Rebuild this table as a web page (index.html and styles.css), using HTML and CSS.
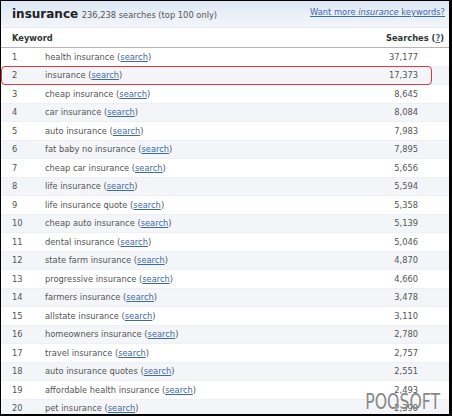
FILE: index.html
```html
<!DOCTYPE html>
<html>
<head>
<meta charset="utf-8">
<link rel="stylesheet" href="styles.css">
</head>
<body>
<div class="frame">
  <div class="topbar">
    <div class="title"><span class="kw">insurance</span> <span class="count">236,238 searches (top 100 only)</span></div>
    <a class="more" href="#">Want more <i>insurance</i> keywords?</a>
  </div>
  <div class="head">
    <span class="h-kw">Keyword</span>
    <span class="h-s">Searches (<a href="#">?</a>)</span>
  </div>
  <div class="rows">
    <div class="row"><span class="n">1</span><span class="k">health insurance (<a href="#">search</a>)</span><span class="s">37,177</span></div>
    <div class="row alt"><span class="n">2</span><span class="k">insurance (<a href="#">search</a>)</span><span class="s">17,373</span><div class="mark"></div></div>
    <div class="row"><span class="n">3</span><span class="k">cheap insurance (<a href="#">search</a>)</span><span class="s">8,645</span></div>
    <div class="row alt"><span class="n">4</span><span class="k">car insurance (<a href="#">search</a>)</span><span class="s">8,084</span></div>
    <div class="row"><span class="n">5</span><span class="k">auto insurance (<a href="#">search</a>)</span><span class="s">7,983</span></div>
    <div class="row alt"><span class="n">6</span><span class="k">fat baby no insurance (<a href="#">search</a>)</span><span class="s">7,895</span></div>
    <div class="row"><span class="n">7</span><span class="k">cheap car insurance (<a href="#">search</a>)</span><span class="s">5,656</span></div>
    <div class="row alt"><span class="n">8</span><span class="k">life insurance (<a href="#">search</a>)</span><span class="s">5,594</span></div>
    <div class="row"><span class="n">9</span><span class="k">life insurance quote (<a href="#">search</a>)</span><span class="s">5,358</span></div>
    <div class="row alt"><span class="n">10</span><span class="k">cheap auto insurance (<a href="#">search</a>)</span><span class="s">5,139</span></div>
    <div class="row"><span class="n">11</span><span class="k">dental insurance (<a href="#">search</a>)</span><span class="s">5,046</span></div>
    <div class="row alt"><span class="n">12</span><span class="k">state farm insurance (<a href="#">search</a>)</span><span class="s">4,870</span></div>
    <div class="row"><span class="n">13</span><span class="k">progressive insurance (<a href="#">search</a>)</span><span class="s">4,660</span></div>
    <div class="row alt"><span class="n">14</span><span class="k">farmers insurance (<a href="#">search</a>)</span><span class="s">3,478</span></div>
    <div class="row"><span class="n">15</span><span class="k">allstate insurance (<a href="#">search</a>)</span><span class="s">3,110</span></div>
    <div class="row alt"><span class="n">16</span><span class="k">homeowners insurance (<a href="#">search</a>)</span><span class="s">2,780</span></div>
    <div class="row"><span class="n">17</span><span class="k">travel insurance (<a href="#">search</a>)</span><span class="s">2,757</span></div>
    <div class="row alt"><span class="n">18</span><span class="k">auto insurance quotes (<a href="#">search</a>)</span><span class="s">2,551</span></div>
    <div class="row"><span class="n">19</span><span class="k">affordable health insurance (<a href="#">search</a>)</span><span class="s">2,493</span></div>
    <div class="row alt"><span class="n">20</span><span class="k">pet insurance (<a href="#">search</a>)</span><span class="s">2,390</span></div>
  </div>
  <div class="watermark">POOSOFT</div>
</div>
</body>
</html>
```
FILE: styles.css
```css
html, body {
  margin: 0;
  padding: 0;
  background: #fff;
}
.frame {
  position: relative;
  width: 452px;
  height: 416px;
  box-sizing: border-box;
  border-top: 1px solid #000;
  border-left: 1px solid #000;
  border-right: 3px solid #000;
  border-bottom: 2px solid #000;
  overflow: hidden;
  font-family: "DejaVu Sans", Verdana, sans-serif;
  font-size: 8.3px;
  color: #555;
}
a {
  color: #3d6aa8;
  text-decoration: underline;
}
.topbar {
  height: 26px;
  display: flex;
  align-items: center;
  justify-content: space-between;
  padding: 0 4px 0 11px;
  background: linear-gradient(#dde8f4, #f3f6fa);
  border-bottom: 1px solid #e6ebf1;
}
.title .kw {
  font-size: 12px;
  font-weight: bold;
  color: #222;
}
.title .count {
  font-size: 8.3px;
  color: #555;
  margin-left: 1px;
}
.more {
  font-size: 8.3px;
  margin-top: -5px;
}
.head {
  height: 19px;
  display: flex;
  align-items: center;
  justify-content: space-between;
  padding: 0 5px 0 11px;
  font-weight: bold;
  color: #333;
  border-bottom: 1px solid #b5b5b5;
}
.rows {
  display: flex;
  flex-direction: column;
}
.row {
  position: relative;
  height: 18.5px;
  display: flex;
  align-items: center;
  padding: 0 31px 0 11px;
  border-bottom: 1px solid #edf0f4;
  box-sizing: border-box;
}
.row.alt {
  background: #f3f5f8;
}
.n {
  width: 33px;
}
.k {
  flex: 1;
}
.s {
  text-align: right;
}
.mark {
  position: absolute;
  left: 0;
  right: 17px;
  top: -1px;
  bottom: -1px;
  border: 1.5px solid #e03a3a;
  border-radius: 4px;
}
.watermark {
  position: absolute;
  right: 9px;
  bottom: 0px;
  font-family: "Liberation Sans Narrow", "DejaVu Sans Condensed", sans-serif;
  font-size: 21px;
  color: #888;
  transform: scaleX(0.83);
  transform-origin: right bottom;
}
```
